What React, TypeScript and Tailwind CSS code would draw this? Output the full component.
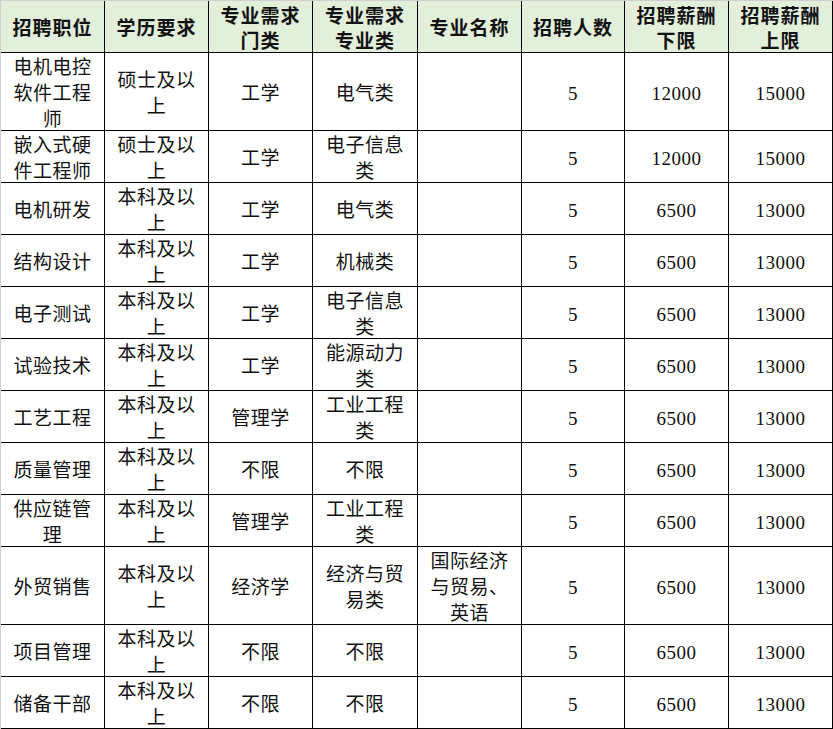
const headers = [
  "招聘职位",
  "学历要求",
  "专业需求\n门类",
  "专业需求\n专业类",
  "专业名称",
  "招聘人数",
  "招聘薪酬\n下限",
  "招聘薪酬\n上限",
];

const master = "硕士及以\n上";
const bachelor = "本科及以\n上";

const rows: string[][] = [
  ["电机电控\n软件工程\n师", master, "工学", "电气类", "", "5", "12000", "15000"],
  ["嵌入式硬\n件工程师", master, "工学", "电子信息\n类", "", "5", "12000", "15000"],
  ["电机研发", bachelor, "工学", "电气类", "", "5", "6500", "13000"],
  ["结构设计", bachelor, "工学", "机械类", "", "5", "6500", "13000"],
  ["电子测试", bachelor, "工学", "电子信息\n类", "", "5", "6500", "13000"],
  ["试验技术", bachelor, "工学", "能源动力\n类", "", "5", "6500", "13000"],
  ["工艺工程", bachelor, "管理学", "工业工程\n类", "", "5", "6500", "13000"],
  ["质量管理", bachelor, "不限", "不限", "", "5", "6500", "13000"],
  ["供应链管\n理", bachelor, "管理学", "工业工程\n类", "", "5", "6500", "13000"],
  ["外贸销售", bachelor, "经济学", "经济与贸\n易类", "国际经济\n与贸易、\n英语", "5", "6500", "13000"],
  ["项目管理", bachelor, "不限", "不限", "", "5", "6500", "13000"],
  ["储备干部", bachelor, "不限", "不限", "", "5", "6500", "13000"],
];

export default function App() {
  return (
    <div className="w-[833px] h-[729px] bg-white overflow-hidden">
      <div className="border-l border-t border-[#d0d0d0] w-[833px]">
        <div className="grid grid-cols-[103px_103px_103px_104px_103px_102px_103px_103px] grid-rows-[51px_77px_repeat(8,51px)_77px_repeat(2,51px)] gap-px bg-black border-r border-b border-black w-[832px] font-['Liberation_Serif','Noto_Sans_CJK_SC',serif] text-[#111]">
          {headers.map((h, i) => (
            <div
              key={"h" + i}
              className="flex items-center justify-center bg-[#e2efda] text-center whitespace-pre-line text-[19px] leading-[25px] font-bold tracking-[1px]"
            >
              <span className="translate-y-[2px]">{h}</span>
            </div>
          ))}
          {rows.map((row, r) =>
            row.map((cell, c) => (
              <div
                key={r + "-" + c}
                className="flex items-center justify-center bg-white text-center whitespace-pre-line text-[19px] leading-[26px] tracking-[0.5px]"
              >
                <span className="translate-y-[2px]">{cell}</span>
              </div>
            ))
          )}
        </div>
      </div>
    </div>
  );
}
